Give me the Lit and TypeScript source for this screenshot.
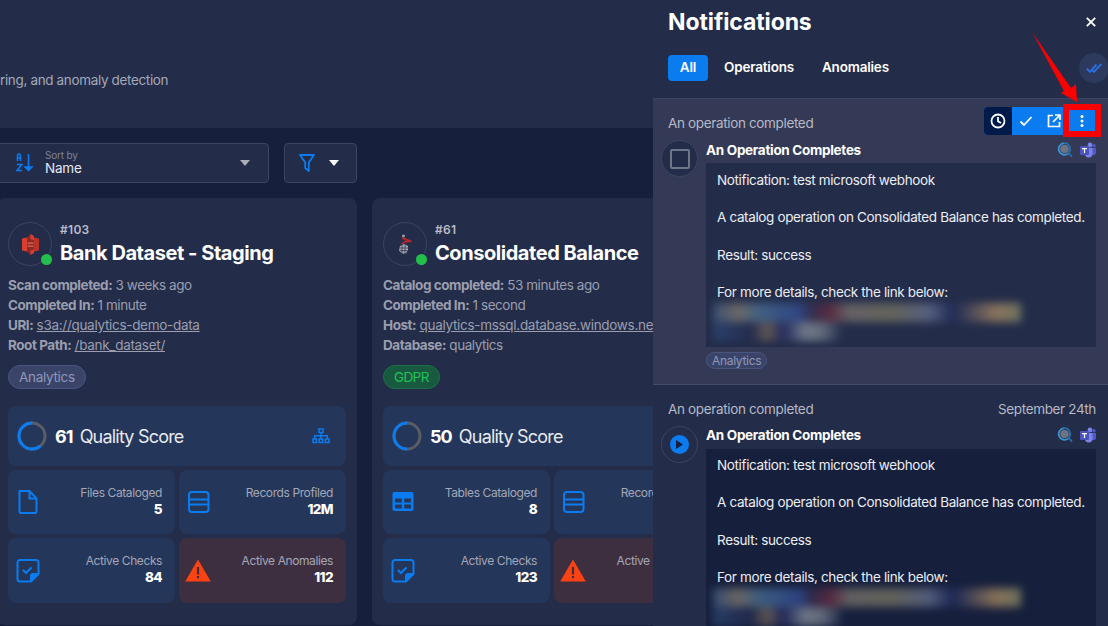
import { LitElement, html, css, svg } from 'lit';
import { customElement } from 'lit/decorators.js';

type Stat = { icon: string; label: string; value: string; alert?: boolean };
type Meta = { key: string; val: string; link?: boolean };
type Card = {
  id: string; title: string; logo: string; meta: Meta[];
  tag: string; tagClass: string; score: number; tree: boolean; stats: Stat[];
};

const cards: Card[] = [
  {
    id: '#103', title: 'Bank Dataset - Staging', logo: 's3',
    meta: [
      { key: 'Scan completed:', val: '3 weeks ago' },
      { key: 'Completed In:', val: '1 minute' },
      { key: 'URI:', val: 's3a://qualytics-demo-data', link: true },
      { key: 'Root Path:', val: '/bank_dataset/', link: true },
    ],
    tag: 'Analytics', tagClass: 'analytics', score: 61, tree: true,
    stats: [
      { icon: 'file', label: 'Files Cataloged', value: '5' },
      { icon: 'records', label: 'Records Profiled', value: '12M' },
      { icon: 'check', label: 'Active Checks', value: '84' },
      { icon: 'warn', label: 'Active Anomalies', value: '112', alert: true },
    ],
  },
  {
    id: '#61', title: 'Consolidated Balance', logo: 'sql',
    meta: [
      { key: 'Catalog completed:', val: '53 minutes ago' },
      { key: 'Completed In:', val: '1 second' },
      { key: 'Host:', val: 'qualytics-mssql.database.windows.net', link: true },
      { key: 'Database:', val: 'qualytics' },
    ],
    tag: 'GDPR', tagClass: 'gdpr', score: 50, tree: false,
    stats: [
      { icon: 'table', label: 'Tables Cataloged', value: '8' },
      { icon: 'records', label: 'Records Profiled', value: '9M' },
      { icon: 'check', label: 'Active Checks', value: '123' },
      { icon: 'warn', label: 'Active Anomalies', value: '40', alert: true },
    ],
  },
];

const icons: Record<string, unknown> = {
  file: svg`<svg width="24" height="24" viewBox="0 0 24 24" fill="none" stroke="#0a7cf0" stroke-width="2"><path d="M3.500 1h10l7 7.500v13a1.500 1.500 0 0 1-1.500 1.500H5a1.500 1.500 0 0 1-1.500-1.500z" stroke-linejoin="round"/><path d="M13.500 1v7.500h7"/></svg>`,
  records: svg`<svg width="24" height="24" viewBox="0 0 24 24" fill="none" stroke="#0a7cf0" stroke-width="2"><rect x="2" y="2" width="19.500" height="20" rx="3"/><path d="M2 9.500h19.500M2 14.500h19.500"/></svg>`,
  table: svg`<svg width="24" height="24" viewBox="0 0 24 24"><path fill="#0a7cf0" fill-rule="evenodd" d="M3.500 2h17A2 2 0 0 1 22.500 4v15a2 2 0 0 1-2 2h-17a2 2 0 0 1-2-2V4a2 2 0 0 1 2-2zM4 8.500v4h6.800v-4zm9.200 0v4H20v-4zM4 14.500v4h6.800v-4zm9.200 0v4H20v-4z"/></svg>`,
  check: svg`<svg width="24" height="24" viewBox="0 0 24 24" fill="none" stroke="#0a7cf0" stroke-width="2"><path d="M4 1h16A2.500 2.500 0 0 1 22.500 3.500v11.500l-7.500 7.500H4A2.500 2.500 0 0 1 1.500 20V3.500A2.500 2.500 0 0 1 4 1z" stroke-linejoin="round"/><path d="M15 22.500v-5.500a2 2 0 0 1 2-2h5.500" fill="#0a7cf0"/><path d="M7 11l3 3 5.500-5.500" stroke-width="2.200"/></svg>`,
  warn: svg`<svg width="26" height="24" viewBox="0 0 26 24"><path fill="#fb4212" d="M13 .5l12.800 22H.2z"/><path fill="#3e2f40" d="M11.900 8h2.200v7.500h-2.200zM11.900 17h2.200v2.300h-2.200z"/></svg>`,
};

const treeIcon = svg`<svg width="18" height="16" viewBox="0 0 18 16" fill="none" stroke="#0a7cf0" stroke-width="1.500"><rect x="7" y="1" width="4" height="3.500"/><rect x="1" y="11" width="3.500" height="3.500"/><rect x="7.200" y="11" width="3.500" height="3.500"/><rect x="13.500" y="11" width="3.500" height="3.500"/><path d="M9 4.500V11M2.700 11V7.700h12.600V11"/></svg>`;

const s3Logo = svg`<svg width="17" height="21" viewBox="0 0 17 21"><path fill="#d83f30" d="M0 4.500l5-1v14l-5-1z"/><path fill="#b93328" d="M17 4.500l-5-1v14l5-1z"/><path fill="#8d2a22" d="M5 3.500L8.500 0 12 3.500v14L8.500 21 5 17.500z"/><path fill="#d83f30" d="M8.500 0L12 2v4L8.500 5zM8.500 21L12 19v-3.500l-3.500 1z"/><path fill="#e0695c" d="M5.500 8.500h6v1.200h-6zM5.500 11.500h6v1.200h-6z"/></svg>`;

const sqlLogo = svg`<svg width="15" height="20" viewBox="0 0 15 20" fill="none"><circle cx="5.500" cy="2" r="1.500" fill="#9a9ca6"/><path d="M4 3.500c1 2 4 3 9.500 4-4-.5-7.500 0-10 2.500M5 4l8.500 3.500" stroke="#b3262c" stroke-width="1.600"/><path d="M2 12l4-2 4 2v3.500l-2 4H4l-3-3z" fill="#a3a5af"/><path d="M1.500 14h8.500M2 16.500h7M4 11v8.500M7 11v8.500" stroke="#2a2f45" stroke-width=".7"/></svg>`;

const searchLogo = svg`<svg width="16" height="16" viewBox="0 0 16 16" fill="none"><circle cx="7.500" cy="7" r="4.300" fill="#6b7385"/><path d="M7.500 1.200a5.800 5.800 0 1 0 3.900 10.100" stroke="#3a92d0" stroke-width="1.800"/><path d="M7.500 1.200a5.800 5.800 0 0 1 4 9.800l3.500 3.500" stroke="#2470aa" stroke-width="1.800"/></svg>`;

const teamsLogo = svg`<svg width="16" height="16" viewBox="0 0 16 16"><circle cx="10" cy="3" r="2.400" fill="#7b83eb"/><circle cx="14" cy="3.800" r="1.700" fill="#5059c9"/><path fill="#5059c9" d="M11.500 6H16v5a2.500 2.500 0 0 1-4 1.600z"/><path fill="#7b83eb" d="M5 6h7.500v6a3.800 3.800 0 0 1-7.500.6z"/><rect x="0" y="4" width="9" height="9" rx="1" fill="#4b53bc"/><path fill="#fff" d="M2 6h5v1.200H5.100V11H3.900V7.200H2z"/></svg>`;

@customElement('app-root')
export class AppRoot extends LitElement {
  static styles = css`
    :host {
      display: block;
      position: relative;
      height: 626px;
      overflow: hidden;
      background: #161f3c;
      font-family: Inter, 'Noto Sans', sans-serif;
      color: #fff;
    }
    a { color: inherit; }

    .hero {
      height: 128px;
      box-sizing: border-box;
      background: #232c49;
      padding-top: 71px;
      font-size: 13.500px;
      line-height: 18px;
      letter-spacing: -0.35px;
      color: #a4a8b8;
      white-space: nowrap;
    }

    .toolbar {
      display: flex;
      gap: 15px;
      margin-left: -20px;
      padding-top: 15px;
      height: 40px;
    }
    .select {
      box-sizing: border-box;
      background: #232c49;
      border: 1px solid #3b4563;
      border-radius: 4px;
      display: flex;
      align-items: center;
    }
    .select.sort { width: 289px; padding: 0 18px 0 35px; gap: 11px; }
    .select.filter { width: 73px; justify-content: center; gap: 14px; padding-right: 3px; }
    .sort-text { flex: 1; }
    .sort-text small {
      display: block;
      font-size: 10px;
      line-height: 11px;
      color: #7d8398;
      letter-spacing: -0.2px;
    }
    .sort-text span {
      display: block;
      font-size: 13.500px;
      line-height: 15px;
      letter-spacing: -0.2px;
      color: #e6e8ef;
    }
    .caret {
      width: 0;
      height: 0;
      border-left: 5.500px solid transparent;
      border-right: 5.500px solid transparent;
      border-top: 6px solid #a9adba;
    }
    .caret.white { border-top-color: #fff; }

    .cards {
      display: flex;
      gap: 15px;
      margin-left: -3px;
      margin-top: 15px;
    }
    .card {
      flex: none;
      width: 360px;
      height: 427px;
      box-sizing: border-box;
      background: #232c49;
      border-radius: 8px;
      padding: 24px 11px 0;
    }
    .card-head { display: flex; gap: 8px; height: 46px; }
    .avatar {
      position: relative;
      box-sizing: border-box;
      width: 44px;
      height: 44px;
      border: 1px solid #3b4563;
      border-radius: 50%;
      display: flex;
      align-items: center;
      justify-content: center;
      flex: none;
    }
    .dot {
      position: absolute;
      right: -1px;
      bottom: 0;
      width: 11px;
      height: 11px;
      border-radius: 50%;
      background: #22c04b;
    }
    .card-id {
      font-size: 12px;
      line-height: 14px;
      margin-top: 1px;
      font-weight: 600;
      letter-spacing: 0.3px;
      color: #b9bcc8;
    }
    .card-title {
      font-size: 20px;
      line-height: 26px;
      margin-top: 3px;
      font-weight: 700;
      letter-spacing: -0.45px;
      white-space: nowrap;
    }
    .meta { margin-top: 7px; }
    .meta div {
      font-size: 13.500px;
      line-height: 20px;
      letter-spacing: -0.45px;
      color: #9a9eae;
      white-space: nowrap;
    }
    .meta b { font-weight: 700; }
    .meta a { letter-spacing: -0.3px; }
    .tag {
      display: inline-block;
      box-sizing: border-box;
      border-radius: 12px;
      border: 1px solid #4a5480;
      background: #3a4468;
      color: #8f97bb;
      font-size: 13.500px;
      letter-spacing: -0.3px;
      line-height: 22px;
      height: 24px;
      padding: 0 10px;
    }
    .tag.gdpr {
      background: #175a3f;
      border-color: #1e7048;
      color: #1fc457;
      letter-spacing: -0.6px;
    }
    .card .tag { margin-top: 10px; display: block; width: fit-content; }
    .stats {
      margin-top: 17px;
      display: grid;
      grid-template-columns: 167px 167px;
      grid-template-rows: 60px 64px 65px;
      gap: 4px;
    }
    .stat {
      background: #24365a;
      border-radius: 8px;
      display: flex;
      align-items: center;
      justify-content: space-between;
      padding: 0 13px 0 8px;
      min-width: 0;
    }
    .stat.alert { background: #3e2f40; padding-left: 6px; }
    .stat.score {
      grid-column: 1 / 3;
      padding: 0 16px 0 9px;
      font-size: 18px;
    }
    .score-left { display: flex; align-items: center; gap: 8px; }
    .score-left b { font-weight: 700; letter-spacing: -0.9px; }
    .score-left span { letter-spacing: -0.8px; margin-left: -1px; color: #e8eaf0; }
    .stat-icon { display: flex; }
    .stat-text { text-align: right; white-space: nowrap; padding-bottom: 3px; }
    .stat-text small {
      display: block;
      font-size: 12px;
      line-height: 16px;
      letter-spacing: -0.4px;
      color: #a3a7b6;
    }
    .stat-text b {
      display: block;
      font-size: 13.500px;
      line-height: 16px;
      font-weight: 800;
      letter-spacing: -0.6px;
    }

    .panel {
      position: absolute;
      top: 0;
      right: 0;
      width: 455px;
      height: 626px;
      overflow: hidden;
      background: #232c49;
    }
    .panel-head {
      box-sizing: border-box;
      height: 99px;
      padding: 9px 12px 0 15px;
      border-bottom: 1px solid #3b4563;
    }
    .title-row {
      display: flex;
      justify-content: space-between;
      align-items: center;
      height: 26px;
    }
    .title-row h2 {
      margin: 0;
      font-size: 23px;
      font-weight: 700;
      letter-spacing: -0.1px;
    }
    .tab-row {
      display: flex;
      align-items: center;
      margin-top: 20px;
      height: 26px;
      gap: 14px;
    }
    .tab {
      font-size: 13.500px;
      font-weight: 600;
      letter-spacing: -0.2px;
      padding: 0 2px 2px;
      line-height: 24px;
    }
    .tab.sel {
      background: #0a7cf0;
      border-radius: 4px;
      width: 40px;
      box-sizing: border-box;
      text-align: center;
    }
    .tab.second { margin-right: 10px; }
    .read-all {
      margin-left: auto;
      margin-right: -13px;
      width: 30px;
      height: 30px;
      border-radius: 50%;
      background: #2d3a5e;
      display: flex;
      align-items: center;
      justify-content: center;
    }

    .notif {
      position: relative;
      box-sizing: border-box;
      padding: 14px 12px 0 15px;
    }
    .notif.active {
      background: #343a56;
      height: 286px;
      border-bottom: 1px solid #454b68;
    }
    .notif-top {
      display: flex;
      justify-content: space-between;
      font-size: 13.500px;
      line-height: 20px;
      letter-spacing: -0.35px;
      color: #b6b9c6;
    }
    .notif-main { display: flex; gap: 8px; margin-left: -7px; margin-top: 7px; }
    .state {
      flex: none;
      box-sizing: border-box;
      width: 37px;
      height: 37px;
      border: 1px solid #3b4563;
      border-radius: 50%;
      background: #232c49;
      display: flex;
      align-items: center;
      justify-content: center;
    }
    .notif:not(.active) .state { background: none; }
    .box-check {
      width: 16px;
      height: 16px;
      border: 2px solid #6f7688;
      border-radius: 2px;
    }
    .play {
      width: 19px;
      height: 19px;
      border-radius: 50%;
      background: #0a7cf0;
      display: flex;
      align-items: center;
      justify-content: center;
    }
    .notif-body { flex: 1; min-width: 0; padding-top: 3px; }
    .notif:not(.active) .notif-body { padding-top: 2px; }
    .notif-title {
      display: flex;
      align-items: center;
      justify-content: space-between;
      height: 14px;
      font-size: 13.500px;
      font-weight: 700;
      letter-spacing: -0.3px;
      white-space: nowrap;
    }
    .notif-title span { display: flex; gap: 7px; }
    .message {
      margin-top: 6px;
      background: #232c49;
      height: 184px;
      padding: 8px 11px 0;
      box-sizing: border-box;
      font-size: 13.500px;
      letter-spacing: -0.36px;
      color: #eceef3;
      overflow: hidden;
    }
    .notif:not(.active) .message {
      background: #161f3c;
      height: 300px;
      margin-top: 7px;
      padding-top: 7px;
    }
    .message p { margin: 0 0 18.700px; line-height: 18.700px; white-space: nowrap; }
    .blur {
      margin: -18px 0 0 -4px;
      width: 320px;
      height: 40px;
      filter: blur(4px);
      opacity: 0.72;
    }
    .blur i { display: block; }
    .blur .a {
      height: 19px;
      width: 308px;
      background: linear-gradient(90deg, #3f5c84 0%, #8a7f70 8%, #4d7599 15%, #34509a 28%, #3a2f50 32%, #6d2b3f 38%, #7d7670 44%, #7d7a62 58%, #6a7393 70%, #1f2b5c 78%, #b39062 92%, #8a8f6a 100%);
    }
    .blur .b {
      height: 19px;
      width: 128px;
      background: linear-gradient(90deg, #2d4a78 0%, #252b50 30%, #7b6a58 42%, #232a66 55%, #8e96a2 72%, #7c8592 85%, #2a3350 100%);
    }
    .notif .tag.small {
      margin-top: 5px;
      font-size: 12px;
      line-height: 15px;
      height: 17px;
      padding: 0 5px;
      border-radius: 9px;
      letter-spacing: -0.3px;
    }

    /* hover actions and the screenshot annotation lie over the row */
    .actions {
      position: absolute;
      top: 8px;
      right: 12px;
      height: 28px;
      display: flex;
      border-radius: 4px;
      overflow: hidden;
      background: #0a7cf0;
    }
    .actions div {
      width: 28px;
      display: flex;
      align-items: center;
      justify-content: center;
    }
    .actions .clock { background: #001b4a; }
    .highlight {
      position: absolute;
      left: 410px;
      top: 104px;
      width: 38px;
      height: 33px;
      box-sizing: border-box;
      border: 6px solid #fa0000;
    }
    .arrow { position: absolute; left: 375px; top: 28px; }
  `;

  private renderCard(c: Card) {
    const len = 2 * Math.PI * 13;
    const on = (len * c.score) / 100;
    return html`
      <section class="card">
        <div class="card-head">
          <div class="avatar">
            ${c.logo === 's3' ? s3Logo : sqlLogo}
            <i class="dot"></i>
          </div>
          <div>
            <div class="card-id">${c.id}</div>
            <div class="card-title">${c.title}</div>
          </div>
        </div>
        <div class="meta">
          ${c.meta.map(
            (m) => html`<div><b>${m.key}</b> ${m.link ? html`<a href="#">${m.val}</a>` : m.val}</div>`
          )}
        </div>
        <span class="tag ${c.tagClass}">${c.tag}</span>
        <div class="stats">
          <div class="stat score">
            <div class="score-left">
              <svg width="30" height="30" viewBox="0 0 30 30" fill="none" stroke-width="3">
                <circle cx="15" cy="15" r="13" stroke="#5b5d66"></circle>
                <circle cx="15" cy="15" r="13" stroke="#0a7cf0" stroke-dasharray="${on} ${len}" transform="rotate(${-360 * (c.score / 100)} 15 15) rotate(-90 15 15)"></circle>
              </svg>
              <b>${c.score}</b><span>Quality Score</span>
            </div>
            ${c.tree ? treeIcon : ''}
          </div>
          ${c.stats.map(
            (s) => html`
              <div class="stat ${s.alert ? 'alert' : ''}">
                <div class="stat-icon">${icons[s.icon]}</div>
                <div class="stat-text"><small>${s.label}</small><b>${s.value}</b></div>
              </div>
            `
          )}
        </div>
      </section>
    `;
  }

  private renderNotif(active: boolean) {
    return html`
      <article class="notif ${active ? 'active' : ''}">
        <div class="notif-top">
          <span>An operation completed</span>
          ${active ? '' : html`<span>September 24th</span>`}
        </div>
        ${active
          ? html`
              <div class="actions">
                <div class="clock">
                  <svg width="16" height="16" viewBox="0 0 16 16" fill="none" stroke="#fff" stroke-width="1.800"><circle cx="8" cy="8" r="6.500"></circle><path d="M8 4v4.300l3 1.700"></path></svg>
                </div>
                <div>
                  <svg width="14" height="12" viewBox="0 0 14 12" fill="none" stroke="#fff" stroke-width="1.800"><path d="M1.500 6.500l3.500 3.500 7.500-8"></path></svg>
                </div>
                <div>
                  <svg width="14" height="14" viewBox="0 0 14 14" fill="none" stroke="#fff" stroke-width="1.700"><path d="M6 1.500H1.500v11h11V8M8 1h5v5M13 1L6 8"></path></svg>
                </div>
                <div>
                  <svg width="4" height="12" viewBox="0 0 4 12" fill="#fff"><circle cx="2" cy="1.500" r="1.500"></circle><circle cx="2" cy="6" r="1.500"></circle><circle cx="2" cy="10.500" r="1.500"></circle></svg>
                </div>
              </div>
            `
          : ''}
        <div class="notif-main">
          <div class="state">
            ${active
              ? html`<i class="box-check"></i>`
              : html`<i class="play"><svg width="7" height="9" viewBox="0 0 7 9" fill="#161f3c"><path d="M0 0l7 4.500L0 9z"></path></svg></i>`}
          </div>
          <div class="notif-body">
            <div class="notif-title">
              An Operation Completes
              <span>${searchLogo}${teamsLogo}</span>
            </div>
            <div class="message">
              <p>Notification: test microsoft webhook</p>
              <p>A catalog operation on Consolidated Balance has completed.</p>
              <p>Result: success</p>
              <p>For more details, check the link below:</p>
              <div class="blur"><i class="a"></i><i class="b"></i></div>
            </div>
            ${active ? html`<span class="tag small">Analytics</span>` : ''}
          </div>
        </div>
      </article>
    `;
  }

  render() {
    return html`
      <div class="hero">ring, and anomaly detection</div>
      <div class="toolbar">
        <div class="select sort">
          <svg width="18" height="20" viewBox="0 0 18 20" fill="none">
            <path d="M1.500 8V2.500a1.500 1.500 0 0 1 3 0V8M1.500 5h3M.8 11.500h5L1 17.500h5" stroke="#0a7cf0" stroke-width="1.600"></path>
            <path d="M12.500 1v16M9 14l3.500 3.500L16 14z" stroke="#0a7cf0" stroke-width="1.500" fill="#0a7cf0"></path>
          </svg>
          <div class="sort-text"><small>Sort by</small><span>Name</span></div>
          <i class="caret"></i>
        </div>
        <div class="select filter">
          <svg width="16" height="18" viewBox="0 0 16 18" fill="none" stroke="#0a7cf0" stroke-width="1.800"><path d="M1 1h14L9.800 8.500V17l-3.600-3V8.500z" stroke-linejoin="round"></path></svg>
          <i class="caret white"></i>
        </div>
      </div>
      <div class="cards">${cards.map((c) => this.renderCard(c))}</div>

      <aside class="panel">
        <header class="panel-head">
          <div class="title-row">
            <h2>Notifications</h2>
            <svg width="10" height="10" viewBox="0 0 10 10" stroke="#fff" stroke-width="1.800"><path d="M.8.8l8.400 8.400M9.200.8L.8 9.200"></path></svg>
          </div>
          <div class="tab-row">
            <div class="tab sel">All</div>
            <div class="tab second">Operations</div>
            <div class="tab">Anomalies</div>
            <div class="read-all">
              <svg width="16" height="10" viewBox="0 0 16 10" fill="none" stroke="#2a6fe0" stroke-width="1.900"><path d="M.7 5.500l3.300 3.300L10.500 1.500M6.500 7.500L8 8.800 15.300 1"></path></svg>
            </div>
          </div>
        </header>
        ${this.renderNotif(true)}
        ${this.renderNotif(false)}
        <div class="highlight"></div>
        <svg class="arrow" width="50" height="76" viewBox="0 0 50 76"><path fill="#fa0000" d="M4 4l39 56 5-4 1 18-16-9 3-2z"></path></svg>
      </aside>
    `;
  }
}

declare global {
  interface HTMLElementTagNameMap {
    'app-root': AppRoot;
  }
}
